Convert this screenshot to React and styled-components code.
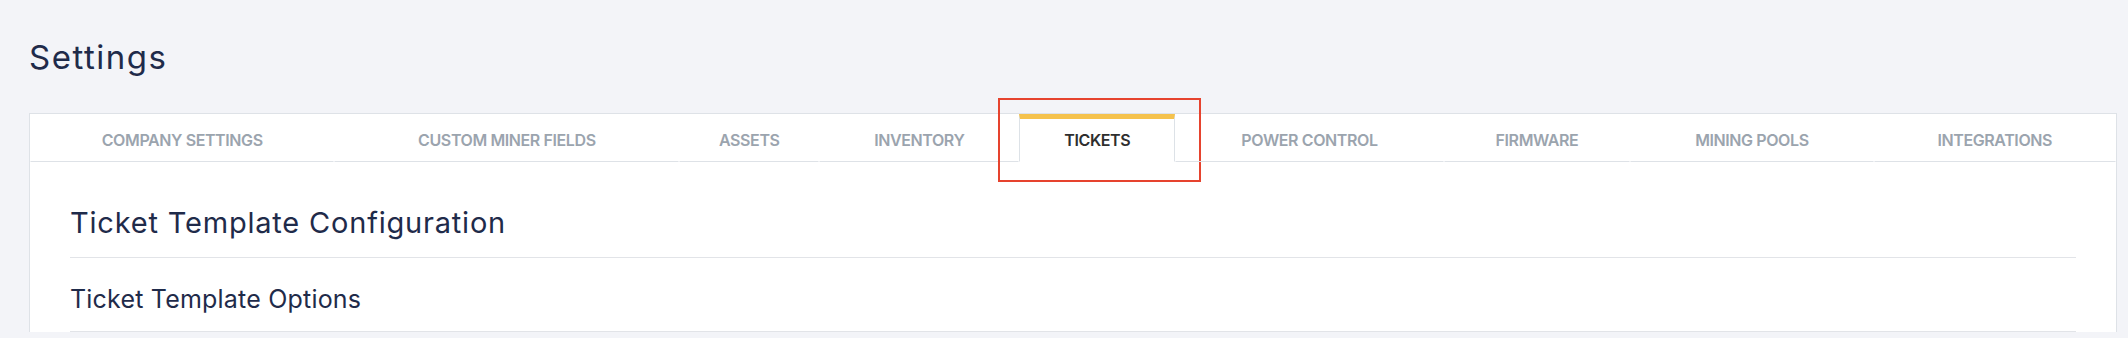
import styled, { createGlobalStyle } from "styled-components";

const GlobalStyle = createGlobalStyle`
  body {
    margin: 0;
    background: #f3f4f8;
    font-family: Inter, "Liberation Sans", sans-serif;
    color: #1f2b4a;
  }
`;

const Page = styled.div`
  padding: 37px 11px 0 29px;
`;

const PageTitle = styled.h1`
  margin: 0 0 36px;
  font-size: 33px;
  line-height: 40px;
  font-weight: 400;
  letter-spacing: 1.5px;
  color: #1f2b4a;
`;

const Card = styled.div`
  background: #fff;
  border: 1px solid #dee2e7;
  border-bottom: none;
`;

const TabBar = styled.nav`
  display: flex;
`;

const Tab = styled.div`
  position: relative;
  flex: ${(props) => props.grow} 1 0;
  height: 48px;
  box-sizing: border-box;
  display: flex;
  align-items: center;
  justify-content: center;
  border-top: 5px solid ${(props) => (props.active ? "#f5c24d" : "transparent")};
  border-left: 1px solid ${(props) => (props.active ? "#dde2e7" : "transparent")};
  border-right: 1px solid ${(props) => (props.active ? "#dde2e7" : "transparent")};
  border-bottom: 1px solid ${(props) => (props.active ? "#fff" : "#dee2e7")};
  font-size: 16px;
  font-weight: 600;
  letter-spacing: -0.4px;
  text-transform: uppercase;
  white-space: nowrap;
  color: ${(props) => (props.active ? "#2e2e2e" : "#9ba4ae")};
  cursor: pointer;
`;

const Highlight = styled.span`
  position: absolute;
  top: -21px;
  bottom: -21px;
  left: -22px;
  right: -27px;
  border: 2px solid #e6432e;
  pointer-events: none;
`;

const Body = styled.div`
  padding: 18px 40px 0;
`;

const SectionTitle = styled.h2`
  margin: 0;
  padding: 25px 0 16px;
  border-bottom: 1px solid #e2e4e8;
  font-size: ${(props) => (props.small ? "25px" : "29px")};
  line-height: ${(props) => (props.small ? "32px" : "36px")};
  letter-spacing: ${(props) => (props.small ? "0.2px" : "0.8px")};
  font-weight: 400;
  color: #1f2b4a;
`;

const tabs = [
  { label: "Company Settings", grow: 305 },
  { label: "Custom Miner Fields", grow: 346 },
  { label: "Assets", grow: 139 },
  { label: "Inventory", grow: 200 },
  { label: "Tickets", grow: 155, active: true },
  { label: "Power Control", grow: 269 },
  { label: "Firmware", grow: 186 },
  { label: "Mining Pools", grow: 243.5 },
  { label: "Integrations", grow: 242.5 },
];

const App = () => {
  return (
    <>
      <GlobalStyle />
      <Page>
        <PageTitle>Settings</PageTitle>
        <Card>
          <TabBar>
            {tabs.map((t) => (
              <Tab key={t.label} grow={t.grow} active={t.active}>
                {t.label}
                {t.active && <Highlight />}
              </Tab>
            ))}
          </TabBar>
          <Body>
            <SectionTitle>Ticket Template Configuration</SectionTitle>
            <SectionTitle small>Ticket Template Options</SectionTitle>
          </Body>
        </Card>
      </Page>
    </>
  );
};

export default App;
